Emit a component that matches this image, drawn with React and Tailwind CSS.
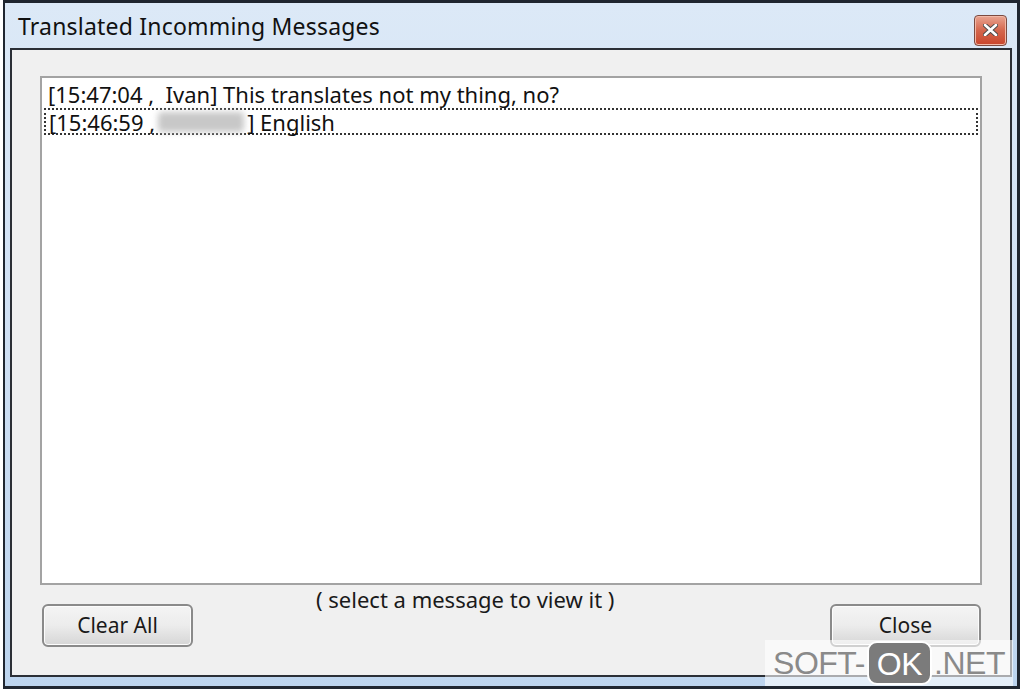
import React from 'react'

const font = { fontFamily: '"Noto Sans", "Open Sans", sans-serif' }

const WinButton = ({ label }) => (
  <button className="w-[151px] h-[43px] rounded-[6px] border-2 border-[#8a8a8a] bg-gradient-to-b from-[#f4f4f4] via-[#ececec] to-[#d6d6d6] text-[21px] text-[#1a1a1a] shadow-[inset_0_0_0_1px_#fcfcfc]">
    {label}
  </button>
)

const App = () => {
  return (
    <div className="w-[1020px] h-[689px] bg-white overflow-hidden" style={font}>
      <div className="relative h-full ml-[3px] flex flex-col border-t-[3px] border-r-[3px] border-b-[3px] border-l-[2px] border-[#1f2630] bg-gradient-to-b from-[#dce9f7] via-[#cfe0f4] to-[#bcd4ee]">
        <div className="h-[45px] shrink-0 flex items-center justify-between pl-[13px] pr-[10px]">
          <span className="text-[23px] text-[#111] tracking-[0.2px] pt-[2px]">Translated Incomming Messages</span>
          <div className="w-[33px] h-[31px] mt-[9px] rounded-[4px] border border-[#7b4a40] flex items-center justify-center bg-gradient-to-b from-[#e8a491] via-[#d4664d] to-[#c8452b] shadow-[inset_0_0_0_1px_#f2b9a8]">
            <svg width="15" height="12" viewBox="0 0 15 12">
              <path d="M2 1 L13 11 M13 1 L2 11" stroke="#4a4a4a" strokeWidth="4.5" strokeLinecap="round" />
              <path d="M2 1 L13 11 M13 1 L2 11" stroke="#ffffff" strokeWidth="2.6" strokeLinecap="round" />
            </svg>
          </div>
        </div>
        <div className="flex-1 mx-[5px] mb-[9px] border-2 border-[#2b2f36] bg-[#f0f0f0] flex flex-col px-[28px] pt-[26px]">
          <div className="h-[509px] border-2 border-[#a3a3a3] bg-white px-[2px] pt-[4px] text-[22px] text-[#111]">
            <div className="px-[4px] h-[26px] leading-[25px]">[15:47:04 ,&nbsp; Ivan] This translates not my thing, no?</div>
            <div className="px-[3px] h-[27px] leading-[22px] border-2 border-dotted border-[#333] flex items-center">
              <span>[15:46:59 ,</span>
              <span className="inline-block w-[86px] h-[20px] mx-[3px] rounded-[4px] bg-[#c8c8c8] blur-[3px]" />
              <span>] English</span>
            </div>
          </div>
          <div className="relative flex justify-between items-start mt-[19px] px-[2px]">
            <WinButton label="Clear All" />
            <span className="absolute left-[276px] -top-[21px] text-[22px] text-[#1a1a1a]">( select a message to view it )</span>
            <div className="mr-[-1px]">
              <WinButton label="Close" />
            </div>
          </div>
        </div>
        <div className="absolute right-[4px] bottom-[0px] h-[46px] w-[248px] bg-white/60 flex items-center justify-center text-[32px] tracking-[-0.5px]" style={{ fontFamily: '"Liberation Sans", Arial, sans-serif' }}>
          <span className="text-[#8a8a8a]">SOFT-</span>
          <span className="mx-[2px] px-[8px] h-[44px] leading-[42px] rounded-[10px] border-2 border-white bg-[#7b7b7b] text-white">OK</span>
          <span className="text-[#8a8a8a]">.NET</span>
        </div>
      </div>
    </div>
  )
}

export default App
